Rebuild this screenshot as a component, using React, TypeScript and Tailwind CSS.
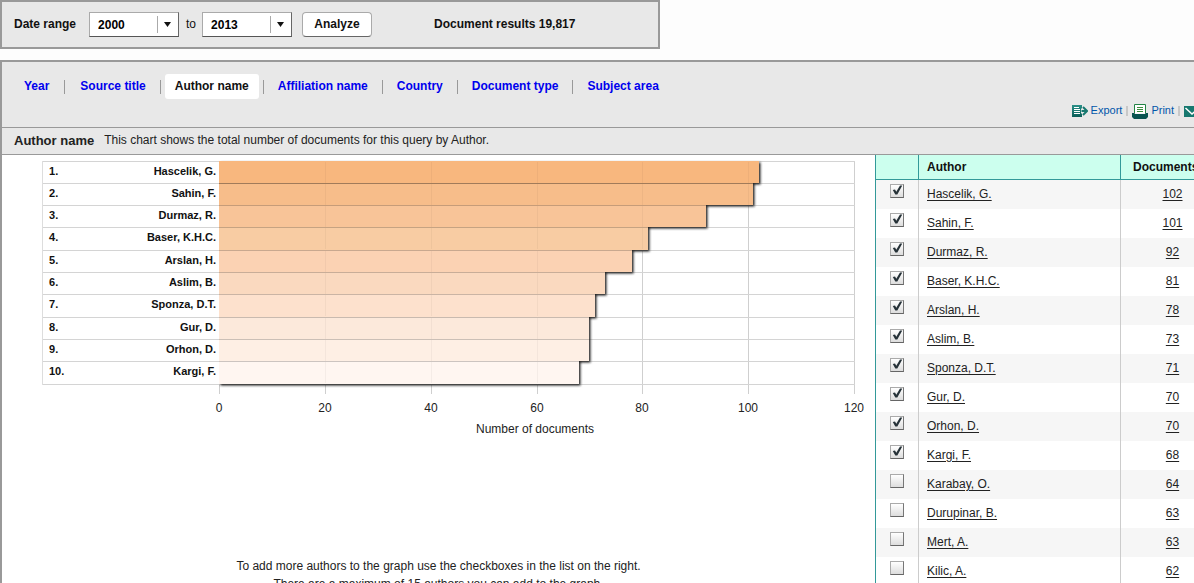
import React, { useState } from "react";

const tabs = [
  "Year",
  "Source title",
  "Author name",
  "Affiliation name",
  "Country",
  "Document type",
  "Subject area",
];

const authors = [
  { name: "Hascelik, G.", docs: 102 },
  { name: "Sahin, F.", docs: 101 },
  { name: "Durmaz, R.", docs: 92 },
  { name: "Baser, K.H.C.", docs: 81 },
  { name: "Arslan, H.", docs: 78 },
  { name: "Aslim, B.", docs: 73 },
  { name: "Sponza, D.T.", docs: 71 },
  { name: "Gur, D.", docs: 70 },
  { name: "Orhon, D.", docs: 70 },
  { name: "Kargi, F.", docs: 68 },
  { name: "Karabay, O.", docs: 64 },
  { name: "Durupinar, B.", docs: 63 },
  { name: "Mert, A.", docs: 63 },
  { name: "Kilic, A.", docs: 62 },
];

const barColors = [
  "#f8b77e", "#f7bd8a", "#f8c498", "#f8cca3", "#fbd2b3",
  "#fad9bf", "#fde1cd", "#fce9db", "#feefe4", "#fff6f1",
];

const ticks = [0, 20, 40, 60, 80, 100, 120];
const axisX = 178;
const plotWidth = 635;
const rowY = (i: number) => Math.floor((i * 223) / 10) + 1;
const valueX = (v: number) => axisX + Math.round((v * plotWidth) / 120);

function BarChart({ checked }: { checked: boolean[] }) {
  const shown = authors.filter((_, i) => checked[i]).slice(0, 10);
  const bottom = rowY(10);
  return (
    <svg width="826" height="280" role="img" aria-label="Documents by author" className="block">
      <defs>
        <filter id="shade" x="-5%" y="-5%" width="110%" height="110%">
          <feDropShadow dx="1.5" dy="1.5" stdDeviation="1" floodColor="#222222" floodOpacity="1" />
        </filter>
      </defs>
      <g shapeRendering="crispEdges">
        {ticks.map((t) => (
          <rect key={t} x={valueX(t)} y="1" width="1" height={bottom + 9} fill="#cfcfcf" />
        ))}
        {Array.from({ length: 11 }, (_, i) => (
          <rect key={i} x="1" y={rowY(i)} width={axisX + plotWidth} height="1" fill="#d4d4d4" />
        ))}
        <rect x="1" y="1" width="1" height={bottom} fill="#dddddd" />
      </g>
      <g filter="url(#shade)">
        {shown.map((a, i) => (
          <rect
            key={a.name}
            x={axisX}
            y={rowY(i)}
            width={valueX(a.docs) - axisX}
            height={rowY(i + 1) - rowY(i)}
            fill={barColors[i]}
          />
        ))}
      </g>
      <g shapeRendering="crispEdges">
        {shown.slice(1).map((a, i) => (
          <rect
            key={a.name}
            x={axisX}
            y={rowY(i + 1)}
            width={valueX(a.docs) - axisX}
            height="1"
            fill="#000000"
            opacity={i === 0 ? 0.35 : 0.2}
          />
        ))}
        {shown.map((a, i) =>
          ticks
            .filter((t) => t > 0 && t < a.docs)
            .map((t) => (
              <rect key={a.name + t} x={valueX(t)} y={rowY(i) + 1} width="1" height="21" fill="#000000" opacity="0.04" />
            )),
        )}
      </g>
      <rect x="166" y="2" width="12" height="226" fill="#ffffff" />
      <g shapeRendering="crispEdges">
        {Array.from({ length: 11 }, (_, i) => (
          <rect key={i} x="160" y={rowY(i)} width="18" height="1" fill="#d4d4d4" />
        ))}
      </g>
      <g fontSize="11" fontWeight="bold" fill="#111111">
        {shown.map((a, i) => (
          <g key={a.name}>
            <text x="8" y={rowY(i) + 14}>{i + 1}.</text>
            <text x="175" y={rowY(i) + 14} textAnchor="end">{a.name}</text>
          </g>
        ))}
      </g>
      <g fontSize="12" fill="#222222" textAnchor="middle">
        {ticks.map((t) => (
          <text key={t} x={valueX(t)} y="252">{t}</text>
        ))}
        <text x="494" y="273">Number of documents</text>
      </g>
    </svg>
  );
}

function YearSelect({ id, value }: { id: string; value: string }) {
  return (
    <span className="relative inline-flex">
      <select
        id={id}
        defaultValue={value}
        className="h-[25px] w-[90px] appearance-none border border-[#aaaaaa] border-b-[#555555] border-r-[#666666] bg-white pl-2 text-[12px] font-bold text-black"
      >
        {["2000", "2005", "2010", "2013"].map((y) => (
          <option key={y}>{y}</option>
        ))}
      </select>
      <svg width="22" height="17" viewBox="0 0 22 17" className="pointer-events-none absolute top-1 right-0" aria-hidden="true">
        <path d="M.5 0V17" stroke="#aaa" />
        <path d="M7 6H14L10.5 11Z" fill="#111" />
      </svg>
    </span>
  );
}

function ExportIcon() {
  return (
    <svg width="16" height="12" viewBox="0 0 16 12" aria-hidden="true">
      <defs>
        <linearGradient id="teal" x1="0" y1="0" x2="0" y2="1">
          <stop offset="0" stopColor="#2b9088" />
          <stop offset="1" stopColor="#0a5d57" />
        </linearGradient>
      </defs>
      <path d="M0 0H10V3L9 4V8L10 9V12H0Z" fill="url(#teal)" />
      <path d="M2 2.5H7M2 4.5H8M2 6.5H8M2 8.5H8" stroke="#fff" />
      <path d="M9.500 6H14.500M11 2L15 6L11 10" fill="none" stroke="#17786f" strokeWidth="2" />
    </svg>
  );
}

function PrintIcon() {
  return (
    <svg width="16" height="15" viewBox="0 0 16 15" aria-hidden="true">
      <path d="M2.500 9.500V.5H13.500V9.500" fill="#fff" stroke="#228445" />
      <path d="M5 3.500H11M5 5.500H11M5 7.500H11" stroke="#3c8c3c" />
      <path d="M0 9H2L3 10H13L14 9H16V13L14 15H2L0 13Z" fill="#07534f" />
    </svg>
  );
}

function MailIcon() {
  return (
    <svg width="16" height="11" viewBox="0 0 16 11" aria-hidden="true" className="shrink-0">
      <rect width="16" height="11" fill="#17786f" />
      <path d="M1.500 2L8 8L14.500 2" fill="none" stroke="#fff" strokeWidth="1.500" />
    </svg>
  );
}

export default function App() {
  const [checked, setChecked] = useState(authors.map((_, i) => i < 10));
  const toggle = (i: number) => setChecked(checked.map((c, j) => (j === i ? !c : c)));

  return (
    <div className="flex h-screen flex-col overflow-hidden bg-[#fdfdfd] font-['Liberation_Sans',Arial,sans-serif] text-[12px] leading-4 text-[#222222]">
      <form
        className="flex h-[49px] w-[660px] max-w-full shrink-0 items-center border-2 border-[#999999] bg-[#e8e8e8] pl-3 font-bold text-[#111111]"
        onSubmit={(e) => e.preventDefault()}
      >
        <label htmlFor="from" className="mr-[13px] pb-[2px]">Date range</label>
        <YearSelect id="from" value="2000" />
        <label htmlFor="to" className="mr-[6px] ml-[7px] pb-[2px] font-normal">to</label>
        <YearSelect id="to" value="2013" />
        <button className="ml-[10px] h-[25px] w-[70px] rounded-[4px] border border-[#aaaaaa] border-b-[#666666] bg-white pb-[2px] font-bold">
          Analyze
        </button>
        <span className="ml-[62px] pb-[2px]">Document results 19,817</span>
      </form>

      <main className="mt-[11px] flex min-h-0 flex-1 flex-col border-t-2 border-l-2 border-[#999999] bg-white">
        <header className="h-[65px] shrink-0 bg-[#e8e8e8] pt-3 pl-3">
          <nav className="flex h-[25px] items-center font-bold">
            {tabs.map((t, i) => (
              <React.Fragment key={t}>
                {i > 0 && (
                  <span className={i === 1 ? "mx-[5px] h-[14px] w-px bg-[#999999]" : "mx-1 h-[14px] w-px bg-[#999999]"} />
                )}
                <a
                  href="#"
                  className={t === "Author name" ? "rounded-[3px] bg-white px-[10px] pt-1 pb-[5px] text-[#111111]" : "px-[10px] pb-[2px] text-[#0000ee]"}
                >
                  {t}
                </a>
              </React.Fragment>
            ))}
          </nav>
          <div className="mt-1 flex h-4 items-center justify-end overflow-hidden text-[11px] text-[#0156aa]">
            <a href="#" className="flex items-center gap-[3px]"><ExportIcon /><span className="pb-[2px]">Export</span></a>
            <span className="mx-1 h-[10px] w-[2px] bg-[#c8c8c8]" />
            <a href="#" className="flex items-center gap-[3px]"><PrintIcon /><span className="pb-[2px]">Print</span></a>
            <span className="mx-1 h-[10px] w-[2px] bg-[#c8c8c8]" />
            <a href="#" aria-label="E-mail" className="flex w-[10px] overflow-hidden"><MailIcon /></a>
          </div>
        </header>

        <div className="flex h-[28px] shrink-0 items-center border-y border-[#999999] bg-[#e8e8e8] pl-3">
          <h1 className="text-[13px] font-bold">Author name</h1>
          <p className="ml-[10px] pb-[2px]">This chart shows the total number of documents for this query by Author.</p>
        </div>

        <div className="flex min-h-0 flex-1">
          <section className="min-w-0 flex-1 overflow-hidden pt-[5px] pl-[39px]">
            <BarChart checked={checked} />
            <div className="mt-[117px] pr-[39px] text-center leading-[18px]">
              <p>To add more authors to the graph use the checkboxes in the list on the right.</p>
              <p>There are a maximum of 15 authors you can add to the graph.</p>
            </div>
          </section>

          <aside className="w-[319px] shrink-0 overflow-hidden border-l border-[#339999]">
            <table className="w-[348px] table-fixed border-separate border-spacing-0">
              <colgroup>
                <col className="w-[43px]" />
                <col className="w-[202px]" />
                <col className="w-[103px]" />
              </colgroup>
              <thead>
                <tr className="h-[25px] bg-[#ccffee] text-[#111111]">
                  <th className="border-r border-b border-[#339999] p-0" aria-label="Selected" />
                  <th className="border-r border-b border-[#339999] p-0 pl-2 text-left">Author</th>
                  <th className="border-b border-[#339999] p-0 pl-3 text-left">Documents</th>
                </tr>
              </thead>
              <tbody>
                {authors.map((a, i) => (
                  <tr key={a.name} className="h-[29px] odd:bg-[#f6f6f6]">
                    <td className="border-r border-[#cccccc] p-0">
                      <label className="relative mx-auto mb-[7px] block size-[14px]">
                        <input
                          type="checkbox"
                          aria-label={a.name}
                          checked={checked[i]}
                          onChange={() => toggle(i)}
                          className="block size-[14px] appearance-none border border-[#aaaaaa] border-r-[#777777] border-b-[#666666] bg-linear-to-b from-white to-[#dddddd]"
                        />
                        {checked[i] && (
                          <svg width="14" height="14" viewBox="0 0 14 14" className="pointer-events-none absolute inset-0" aria-hidden="true">
                            <path d="M2.800 6L5 5.500L6.300 7.800L10 1.500H12.300L7.300 10.500H5.300Z" fill="#263238" />
                          </svg>
                        )}
                      </label>
                    </td>
                    <td className="border-r border-[#cccccc] p-0 pb-[2px] pl-2">
                      <a href="#" className="underline underline-offset-2">{a.name}</a>
                    </td>
                    <td className="p-0 pb-[2px] text-center">
                      <a href="#" className="underline underline-offset-2">{a.docs}</a>
                    </td>
                  </tr>
                ))}
              </tbody>
            </table>
          </aside>
        </div>
      </main>
    </div>
  );
}
